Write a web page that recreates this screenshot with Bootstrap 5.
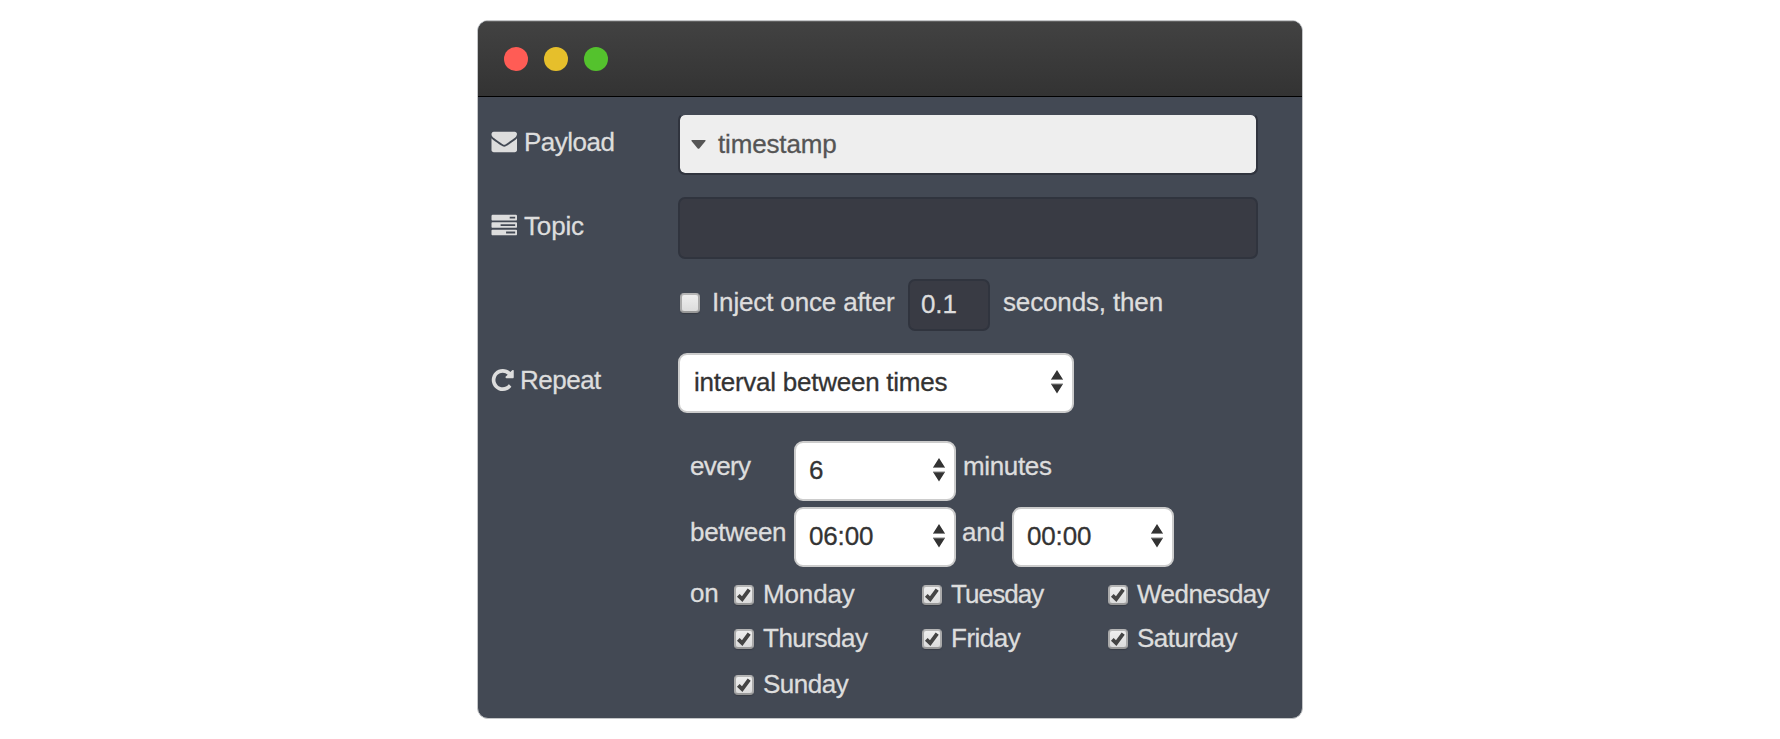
<!DOCTYPE html>
<html lang="en">
<head>
<meta charset="utf-8">
<title>Inject node</title>
<link href="https://cdn.jsdelivr.net/npm/bootstrap@5.3.0/dist/css/bootstrap.min.css" rel="stylesheet">
<style>
body{background:#fff;font:26px/30px "Liberation Sans",Arial,sans-serif;color:#ddd;letter-spacing:-.15px;-webkit-text-stroke:.3px;overflow:hidden}
.win{width:826px;height:699px;margin:20px 0 0 477px;background:#434954;border:1px solid #c4c6c8;border-radius:11px;overflow:hidden}
.titlebar{height:76px;padding:1px 0 0 26px;gap:16px;background:linear-gradient(#424242,#333);border-bottom:1px solid #000;box-shadow:inset 0 1px #606060}
.dot{width:24px;height:24px;border-radius:50%}
.pane{padding:16px 0 0 13px}
.lbl{width:187px;flex:none;gap:7px;white-space:nowrap}
.lbl svg,.caret{flex:none;display:block}
.up2{padding-bottom:4px}.up3{padding-bottom:6px}.up5{padding-bottom:10px}
.field{width:580px;height:62px;background:#393b44;border:2px solid #30343e;border-radius:7px;color:#ddd}
.field.typed{background:#eee;background-clip:padding-box;color:#555;border-top-color:#434954;padding-left:11px;gap:12px}
.delay{width:82px;height:52px;font-size:26px;line-height:30px;letter-spacing:inherit;padding:0 0 2px 11px}
.form-select.pick{height:60px;border:2px solid #ccc;border-radius:9px;background-color:#fff;color:#333;font-size:26px;line-height:30px;letter-spacing:inherit;padding:0 0 2px 13px;flex:none;
 background-image:url("data:image/svg+xml,%3Csvg xmlns='http://www.w3.org/2000/svg' width='12' height='24'%3E%3Cpath fill='%23333' d='M6 0l6 9.500H0zM6 23.500L0 14h12z'/%3E%3Cpath fill='%23888' d='M0 9h12v1H0zM0 13.500h12v1H0z'/%3E%3C/svg%3E");background-size:12px 24px;background-position:right 9px top 14.5px}
.form-select.w-long{width:396px;padding-left:14px;letter-spacing:-.25px}.w-short{width:162px}
.sched{padding-left:199px}
.day-grid{display:grid;grid-template-columns:44px 188px 186px auto;grid-template-rows:44px 44px 48px;align-items:center;margin-top:6px}
.tick{appearance:none;width:20px;height:20px;margin:0;flex:none;border:2px solid #aaa;border-top-color:#b5b5b5;border-bottom-color:#999;border-radius:4px;background:linear-gradient(#eee,#dcdcdc);box-shadow:0 1px 1px #383c45}
.tick:checked{background:url("data:image/svg+xml,%3Csvg xmlns='http://www.w3.org/2000/svg' viewBox='0 0 16 16'%3E%3Cpath fill='none' stroke='%23444' stroke-width='3.800' d='M2.300 8.300l3.900 3.900L13.200 2.600'/%3E%3C/svg%3E"),linear-gradient(#eee,#dcdcdc)}
.day{gap:9px}
.day span{margin-bottom:2px}
.snug{letter-spacing:-.5px}.snugger{letter-spacing:-.9px}
</style>
</head>
<body>
<main class="win">
 <header class="titlebar d-flex align-items-center">
  <span class="dot" style="background:#ff5c55"></span><span class="dot" style="background:#e6bf2b"></span><span class="dot" style="background:#54c22d"></span>
 </header>
 <form class="pane">
  <div class="d-flex align-items-center">
   <label class="lbl up2 snug d-flex align-items-center"><svg width="26" height="26" viewBox="-35 64 1827 1792" preserveAspectRatio="none" fill="#ddd" style="-webkit-text-stroke:0"><path d="M1792 710v794q0 66-47 113t-113 47h-1472q-66 0-113-47t-47-113v-794q44 49 101 87 362 246 497 345 57 42 92.500 65.500t94.500 48 110 24.500h2q51 0 110-24.500t94.500-48 92.500-65.500q170-123 498-345 57-39 100-87zm0-294q0 79-49 151t-122 123q-376 261-468 325-10 7-42.500 31t-54 38.500-52 32.500-57.500 27-50 9h-2q-23 0-50-9t-57.500-27-52-32.500-54-38.500-42.500-31q-91-64-262-182.500t-205-142.500q-62-42-117-115.500t-55-136.500q0-78 41.500-130t118.500-52h1472q65 0 112.500 47t47.500 113z"/></svg>Payload</label>
   <div class="field typed d-flex align-items-center"><svg class="caret" width="15" height="9" viewBox="0 0 15 9"><path fill="#555" d="M1 0h13q1 0 .5 1L8.500 8.300q-1 1-2 0L.5 1Q0 0 1 0z"/></svg><span>timestamp</span></div>
  </div>
  <div class="d-flex align-items-center" style="margin-top:22px">
   <label class="lbl up2 d-flex align-items-center"><svg width="26" height="26" viewBox="-35 0 1827 1792" preserveAspectRatio="none" fill="#ddd"><path d="M1024 1408h640v-128h-640v128zm-384-512h1024v-128h-1024v128zm640-512h384v-128h-384v128zm512 832v256q0 26-19 45t-45 19h-1664q-26 0-45-19t-19-45v-256q0-26 19-45t45-19h1664q26 0 45 19t19 45zm0-512v256q0 26-19 45t-45 19h-1664q-26 0-45-19t-19-45v-256q0-26 19-45t45-19h1664q26 0 45 19t19 45zm0-512v256q0 26-19 45t-45 19h-1664q-26 0-45-19t-19-45v-256q0-26 19-45t45-19h1664q26 0 45 19t19 45z"/></svg>Topic</label>
   <input class="field" type="text">
  </div>
  <div class="d-flex align-items-center" style="margin:20px 0 0 189px">
   <div class="up2"><input class="tick d-block" type="checkbox"></div>
   <span class="up3" style="margin-left:12px;width:196px">Inject once after</span>
   <input class="field delay" type="text" value="0.1">
   <span class="up3" style="margin-left:13px">seconds, then</span>
  </div>
  <div class="d-flex align-items-center" style="margin-top:22px">
   <label class="lbl up3 snug d-flex align-items-center"><svg width="23" height="22" viewBox="93 128 1571 1536" fill="#ddd"><path d="M1664 256v448q0 26-19 45t-45 19h-448q-42 0-59-40-17-39 14-69l138-138q-148-137-349-137-104 0-198.500 40.500t-163.500 109.500-109.500 163.500-40.500 198.500 40.500 198.500 109.500 163.500 163.500 109.500 198.500 40.500q119 0 225-52t179-147q7-10 23-12 15 0 25 9l137 138q9 8 9.500 20.500t-7.500 22.500q-109 132-264 204.500t-327 72.500q-156 0-298-61t-245-164-164-245-61-298 61-298 164-245 245-164 298-61q147 0 284.500 55.500t244.500 156.500l130-129q29-31 70-14 39 17 39 59z"/></svg><span style="margin-left:-1px">Repeat</span></label>
   <select class="form-select pick w-long"><option>interval between times</option></select>
  </div>
  <div class="sched">
   <div class="d-flex align-items-center" style="margin-top:28px">
    <span class="up5" style="width:104px;letter-spacing:-.65px">every</span>
    <select class="form-select pick w-short"><option>6</option></select>
    <span class="up5" style="margin-left:7px;letter-spacing:-.35px">minutes</span>
   </div>
   <div class="d-flex align-items-center" style="margin-top:6px">
    <span class="up5" style="width:104px;letter-spacing:-.3px">between</span>
    <select class="form-select pick w-short"><option>06:00</option></select>
    <span class="up5" style="margin-left:6px;width:50px">and</span>
    <select class="form-select pick w-short"><option>00:00</option></select>
   </div>
   <div class="day-grid">
    <span class="day pb-1">on</span>
    <label class="day d-flex align-items-center"><input class="tick" type="checkbox" checked><span>Monday</span></label>
    <label class="day d-flex align-items-center"><input class="tick" type="checkbox" checked><span class="snugger">Tuesday</span></label>
    <label class="day d-flex align-items-center"><input class="tick" type="checkbox" checked><span class="snug">Wednesday</span></label>
    <span></span>
    <label class="day d-flex align-items-center"><input class="tick" type="checkbox" checked><span class="snug">Thursday</span></label>
    <label class="day d-flex align-items-center"><input class="tick" type="checkbox" checked><span class="snug">Friday</span></label>
    <label class="day d-flex align-items-center"><input class="tick" type="checkbox" checked><span class="snug">Saturday</span></label>
    <span></span>
    <label class="day d-flex align-items-center"><input class="tick" type="checkbox" checked><span class="snug">Sunday</span></label>
   </div>
  </div>
 </form>
</main>
<script src="https://cdn.jsdelivr.net/npm/bootstrap@5.3.0/dist/js/bootstrap.bundle.min.js"></script>
</body>
</html>
